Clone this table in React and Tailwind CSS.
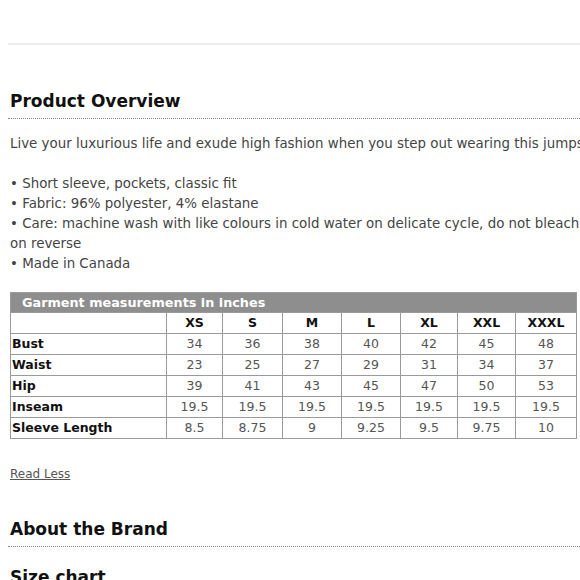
const sizes = ["XS", "S", "M", "L", "XL", "XXL", "XXXL"];
const rows = [
  ["Bust", ["34", "36", "38", "40", "42", "45", "48"]],
  ["Waist", ["23", "25", "27", "29", "31", "34", "37"]],
  ["Hip", ["39", "41", "43", "45", "47", "50", "53"]],
  ["Inseam", ["19.5", "19.5", "19.5", "19.5", "19.5", "19.5", "19.5"]],
  ["Sleeve Length", ["8.5", "8.75", "9", "9.25", "9.5", "9.75", "10"]],
];
const colW = ["w-[156px]", "w-[56px]", "w-[60px]", "w-[59px]", "w-[59px]", "w-[57px]", "w-[58px]", "w-[61px]"];

export default function App() {
  return (
    <div className="w-[580px] h-[580px] overflow-hidden bg-white font-['DejaVu_Sans',sans-serif] text-[#444]">
      <div className="w-[760px] pl-[8px]">
        <div className="h-[43px]" />
        <div className="h-[2px] bg-[#ececec]" />

        <h2 className="mt-[45px] pl-[2px] text-[17px] font-bold text-[#111] leading-[22px]">Product Overview</h2>
        <div className="mt-[6px] w-[572px] border-t border-dotted border-[#888]" />

        <div className="pl-[2px] text-[13.4px] leading-[20px]">
          <p className="mt-[15px] whitespace-nowrap">Live your luxurious life and exude high fashion when you step out wearing this jumpsuit.</p>
          <ul className="mt-[20px] whitespace-nowrap">
            <li>• Short sleeve, pockets, classic fit</li>
            <li>• Fabric: 96% polyester, 4% elastane</li>
            <li>• Care: machine wash with like colours in cold water on delicate cycle, do not bleach, iron</li>
            <li>on reverse</li>
            <li>• Made in Canada</li>
          </ul>
        </div>

        <table className="mt-[18px] ml-[2px] border-collapse text-[12.5px] leading-[20px]">
          <thead>
            <tr className="bg-[#8e8e8e]">
              <th colSpan={8} className="h-[20px] border border-[#9a9a9a] pl-[11px] text-left text-[12.8px] font-bold text-white leading-[18px]">
                Garment measurements in inches
              </th>
            </tr>
            <tr>
              {["", ...sizes].map((s, i) => (
                <th key={i} className={`${colW[i]} h-[21px] border border-[#9a9a9a] font-bold text-[#111] text-center`}>{s}</th>
              ))}
            </tr>
          </thead>
          <tbody>
            {rows.map(([label, vals]) => (
              <tr key={label}>
                <td className="h-[21px] border border-[#9a9a9a] pl-[1px] font-bold text-[#111] text-left">{label}</td>
                {vals.map((v, i) => (
                  <td key={i} className="h-[21px] border border-[#9a9a9a] text-center text-[#555]">{v}</td>
                ))}
              </tr>
            ))}
          </tbody>
        </table>

        <a className="mt-[26px] ml-[2px] inline-block text-[12px] leading-[18px] underline text-[#555]">Read Less</a>

        <h2 className="mt-[33px] pl-[2px] text-[17px] font-bold text-[#111] leading-[22px]">About the Brand</h2>
        <div className="mt-[6px] w-[572px] border-t border-dotted border-[#888]" />

        <h2 className="mt-[19px] pl-[2px] text-[17px] font-bold text-[#111] leading-[22px]">Size chart</h2>
      </div>
    </div>
  );
}
